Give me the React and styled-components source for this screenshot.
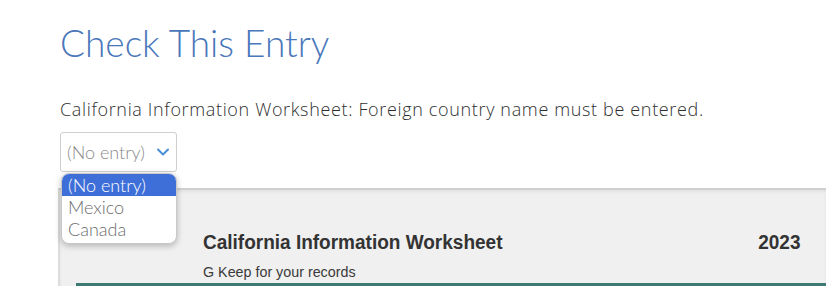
import styled, { createGlobalStyle } from "styled-components";

const Global = createGlobalStyle`
  html, body { margin: 0; padding: 0; background: #fff; overflow: hidden; }
  body { font-family: "Lato", "Open Sans", sans-serif; }
`;

const Page = styled.main`
  width: 826px;
  height: 286px;
  overflow: hidden;
  padding: 22px 0 0 60px;
  box-sizing: border-box;
`;

const Title = styled.h1`
  margin: 0;
  font-family: "Lato", sans-serif;
  font-weight: 300;
  font-size: 37px;
  line-height: 42px;
  color: #4a77ba;
`;

const Message = styled.p`
  margin: 34px 0 0;
  font-family: "Open Sans", sans-serif;
  font-weight: 300;
  font-size: 18px;
  letter-spacing: 0.65px;
  line-height: 22px;
  color: #2f2f2f;
`;

const SelectWrap = styled.div`
  position: relative;
  margin-top: 12px;
  width: 117px;
  z-index: 2;
`;

const SelectBox = styled.div`
  height: 40px;
  box-sizing: border-box;
  border: 1px solid #cfcfcf;
  border-radius: 3px;
  display: flex;
  align-items: center;
  justify-content: space-between;
  padding: 0 6px 0 6px;
  font-family: "Lato", sans-serif;
  font-weight: 300;
  font-size: 18px;
  color: #8a8a8a;
  background: #fff;
`;

const Menu = styled.ul`
  position: absolute;
  top: 41px;
  left: 1px;
  width: 114px;
  margin: 0;
  padding: 0 0 3px;
  list-style: none;
  background: #fff;
  border: 1px solid #c8c8c8;
  border-radius: 8px;
  box-shadow: 0 2px 6px rgba(0, 0, 0, 0.25);
  overflow: hidden;
`;

const Option = styled.li`
  height: 22px;
  line-height: 22px;
  padding: 0 6px;
  font-family: "Lato", sans-serif;
  font-weight: 300;
  font-size: 18px;
  color: ${({ $active }) => ($active ? "#fff" : "#6d6d6d")};
  background: ${({ $active }) => ($active ? "#3e6fd8" : "transparent")};
`;

const Sheet = styled.section`
  margin: 16px 0 0 -2px;
  height: 120px;
  background: #f0f0f0;
  border-top: 2px solid #d0d0d0;
  border-left: 2px solid #dcdcdc;
  box-shadow: inset 0 2px 3px rgba(0, 0, 0, 0.06);
  padding: 41px 26px 0 143px;
  box-sizing: border-box;
`;

const SheetHead = styled.div`
  display: flex;
  justify-content: space-between;
  align-items: baseline;
`;

const SheetTitle = styled.h2`
  margin: 0;
  font-family: "Liberation Sans", Arial, sans-serif;
  font-weight: 700;
  font-size: 20px;
  line-height: 22px;
  color: #333;
  transform: scaleX(0.95);
  transform-origin: left;
`;

const Year = styled.span`
  font-family: "Liberation Sans", Arial, sans-serif;
  font-weight: 700;
  font-size: 20px;
  color: #333;
  transform: scaleX(0.95);
  transform-origin: right;
`;

const Note = styled.div`
  margin-top: 10px;
  font-family: "Liberation Sans", Arial, sans-serif;
  font-size: 14.3px;
  line-height: 16px;
  color: #3a3a3a;
`;

const Bar = styled.div`
  margin: 3px -26px 0 -127px;
  height: 8px;
  background: #3d7a74;
`;

function Chevron() {
  return (
    <svg width="14" height="10" viewBox="0 0 14 10">
      <path d="M2 2.5 L7 7.5 L12 2.5" fill="none" stroke="#4a8ed8" strokeWidth="2" strokeLinecap="round" strokeLinejoin="round" />
    </svg>
  );
}

export default function App() {
  return (
    <Page>
      <Global />
      <Title>Check This Entry</Title>
      <Message>California Information Worksheet: Foreign country name must be entered.</Message>
      <SelectWrap>
        <SelectBox>
          (No entry) <Chevron />
        </SelectBox>
        <Menu>
          <Option $active>(No entry)</Option>
          <Option>Mexico</Option>
          <Option>Canada</Option>
        </Menu>
      </SelectWrap>
      <Sheet>
        <SheetHead>
          <SheetTitle>California Information Worksheet</SheetTitle>
          <Year>2023</Year>
        </SheetHead>
        <Note>G Keep for your records</Note>
        <Bar />
      </Sheet>
    </Page>
  );
}
